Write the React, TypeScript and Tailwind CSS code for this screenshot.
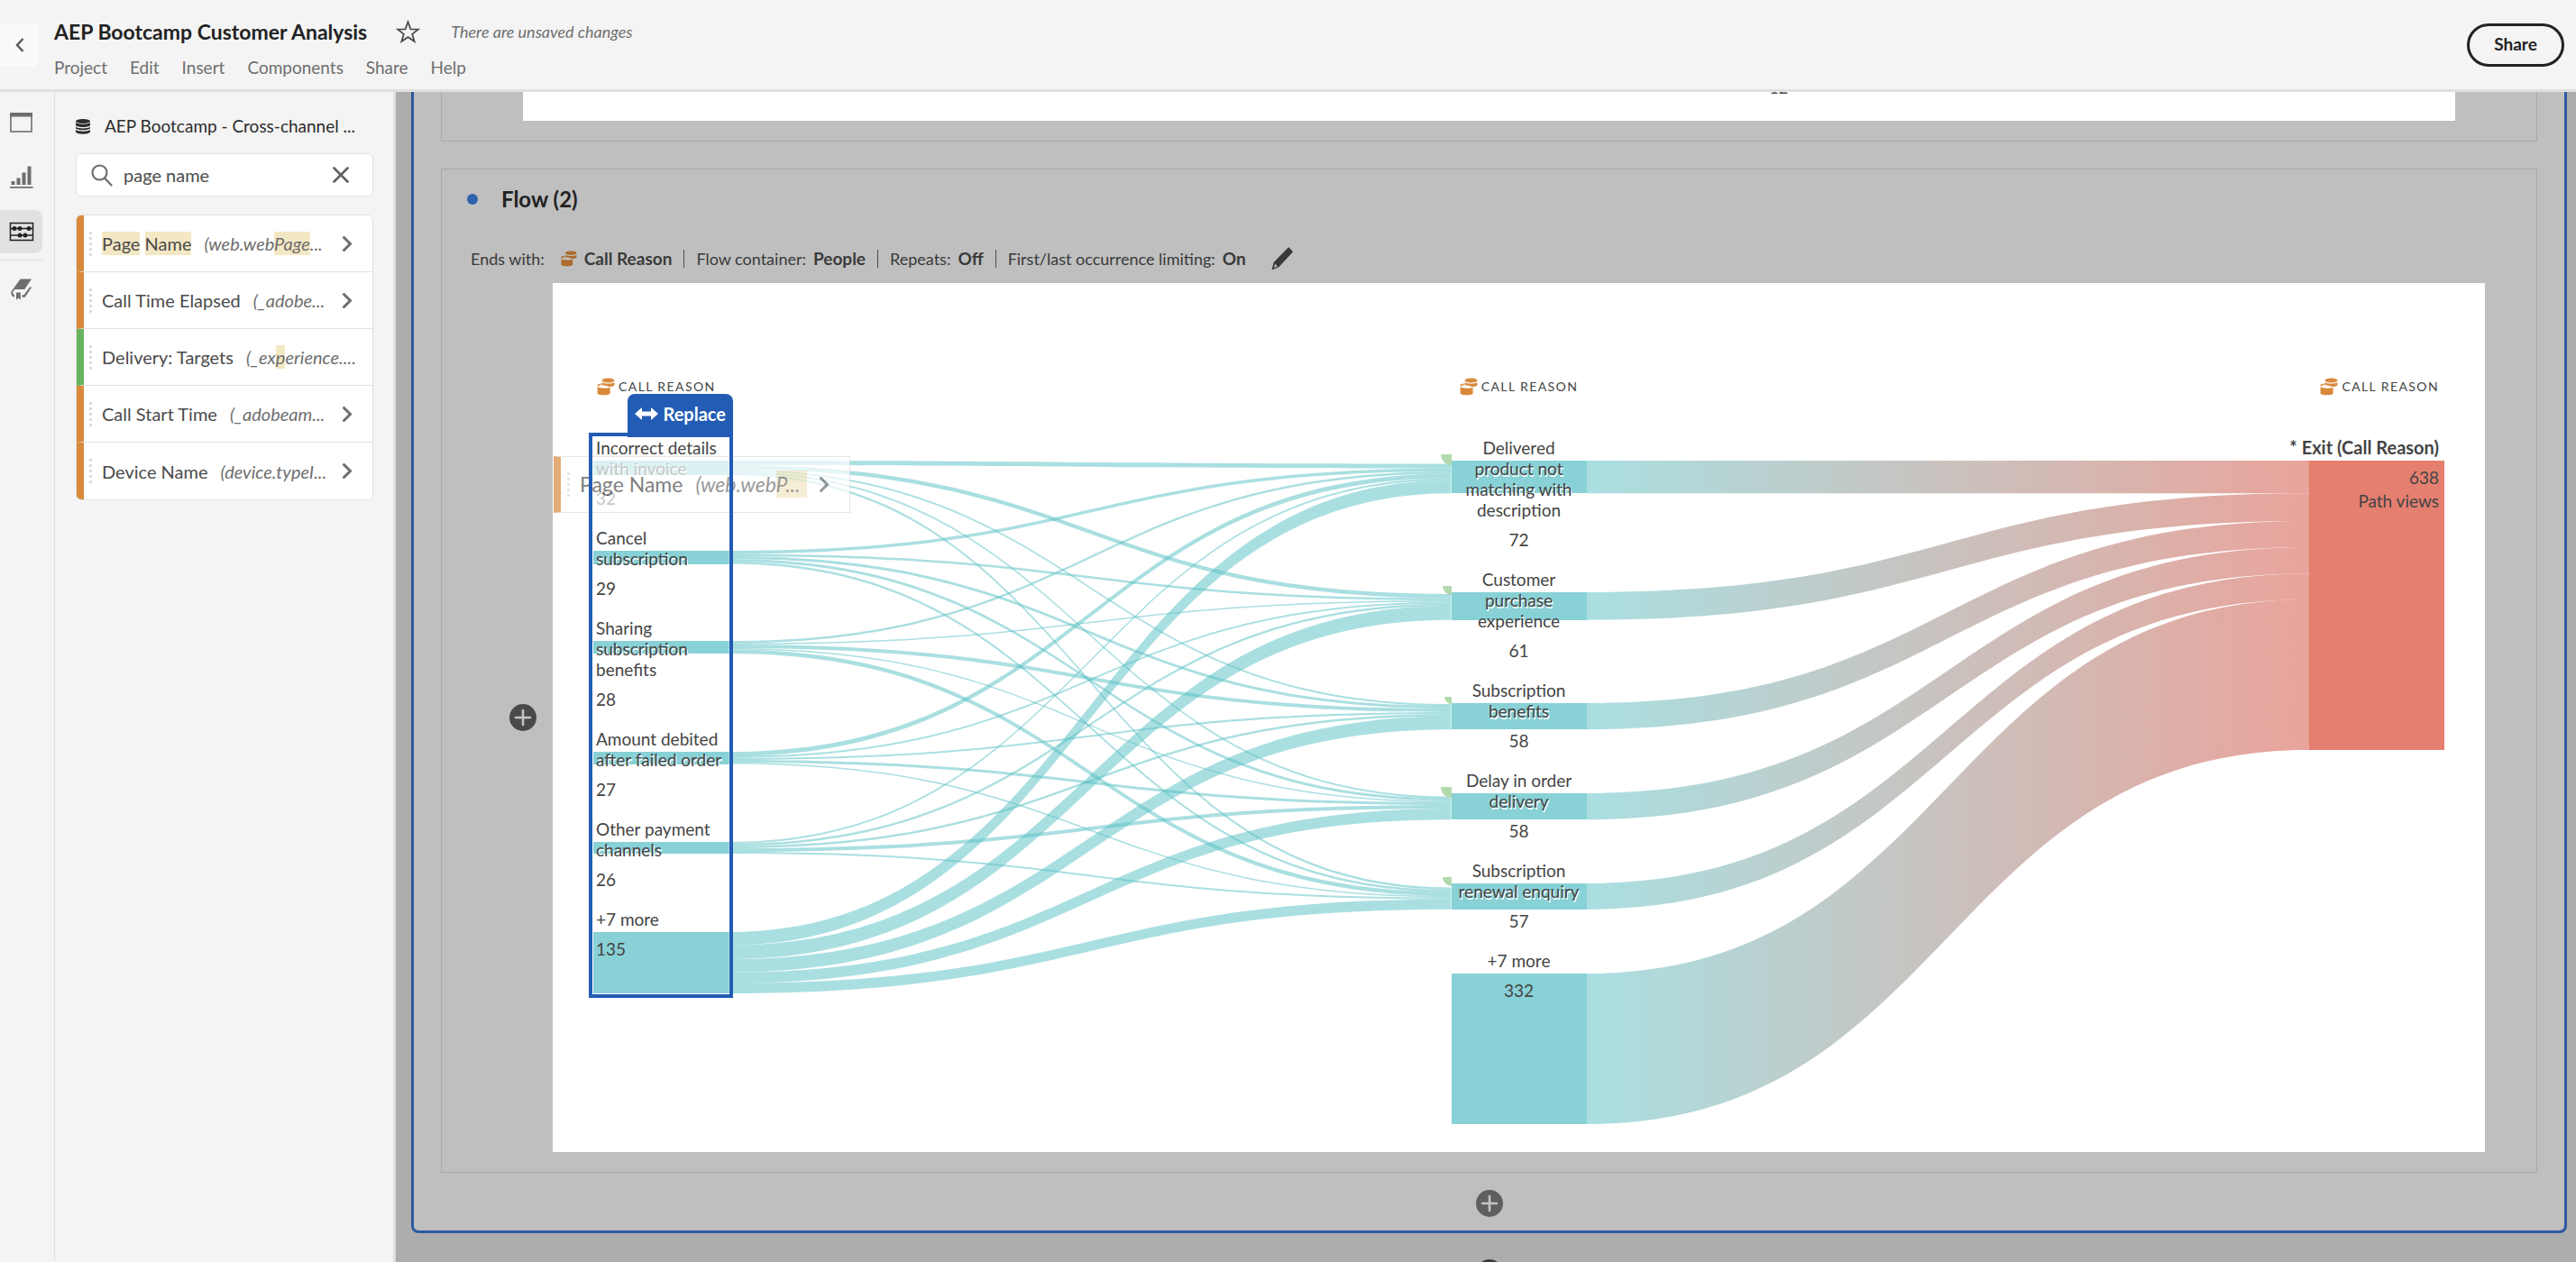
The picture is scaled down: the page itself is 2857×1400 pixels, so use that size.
import type { ReactNode } from 'react';
import clsx from 'clsx';

const menuItems = ['Project', 'Edit', 'Insert', 'Components', 'Share', 'Help'];

interface DimensionItem {
  name: ReactNode;
  path: ReactNode;
  metric?: boolean;
  expandable: boolean;
}

function Mark({ children, className }: { children: ReactNode; className?: string }) {
  return <mark className={clsx('bg-[#f3e8c3] py-px text-inherit', className)}>{children}</mark>;
}

const dimensions: DimensionItem[] = [
  {
    name: (
      <>
        <Mark>Page</Mark> <Mark>Name</Mark>
      </>
    ),
    path: (
      <>
        (web.web<Mark>Page</Mark>...
      </>
    ),
    expandable: true,
  },
  { name: 'Call Time Elapsed', path: '(_adobe...', expandable: true },
  {
    name: 'Delivery: Targets',
    path: (
      <>
        (_ex<Mark>p</Mark>erience....
      </>
    ),
    metric: true,
    expandable: false,
  },
  { name: 'Call Start Time', path: '(_adobeam...', expandable: true },
  { name: 'Device Name', path: '(device.typeI...', expandable: true },
];

interface FlowNode {
  label: string;
  lines: number;
  value: number;
  marker?: string;
}

const sources: FlowNode[] = [
  { label: 'Incorrect details\nwith invoice', lines: 2, value: 32 },
  { label: 'Cancel\nsubscription', lines: 2, value: 29 },
  { label: 'Sharing\nsubscription\nbenefits', lines: 3, value: 28 },
  { label: 'Amount debited\nafter failed order', lines: 2, value: 27 },
  { label: 'Other payment\nchannels', lines: 2, value: 26 },
  { label: '+7 more', lines: 1, value: 135 },
];

const reasons: FlowNode[] = [
  { label: 'Delivered\nproduct not\nmatching with\ndescription', lines: 4, value: 72, marker: 'w-3 h-3' },
  { label: 'Customer\npurchase\nexperience', lines: 3, value: 61, marker: 'w-2.5 h-2.5' },
  { label: 'Subscription\nbenefits', lines: 2, value: 58, marker: 'w-2 h-2' },
  { label: 'Delay in order\ndelivery', lines: 2, value: 58, marker: 'w-3 h-3' },
  { label: 'Subscription\nrenewal enquiry', lines: 2, value: 57, marker: 'w-2.5 h-2.5' },
  { label: '+7 more', lines: 1, value: 332 },
];

// rows: source nodes, columns: first five reasons
const matrix = [
  [10, 9, 4, 4, 5],
  [7, 5, 6, 6, 5],
  [5, 3, 8, 3, 9],
  [10, 4, 4, 6, 3],
  [4, 5, 5, 8, 4],
  [29, 31, 29, 24, 22],
];

const UNIT = 0.503;
const LINE = 23;
const BAR_OFFSET = 26;
const GROUP_EXTRA = 54;
const LINK_WIDTH = 800;
const LINK_HEIGHT = 793;

function barTops(nodes: FlowNode[]) {
  let y = 0;
  return nodes.map((node) => {
    const top = y + BAR_OFFSET;
    y += node.lines * LINE + GROUP_EXTRA;
    return top;
  });
}

function ribbon(y0: number, y1: number, h: number) {
  const mid = LINK_WIDTH / 2;
  return `M0 ${y0}C${mid} ${y0} ${mid} ${y1} ${LINK_WIDTH} ${y1}V${y1 + h}C${mid} ${y1 + h} ${mid} ${y0 + h} 0 ${y0 + h}Z`;
}

const sourceTops = barTops(sources);
const reasonTops = barTops(reasons);

function sourceLinks() {
  const outY = [...sourceTops];
  const inY = matrix[0].map((_, col) => {
    const inflow = matrix.reduce((sum, row) => sum + row[col], 0);
    return reasonTops[col] + (reasons[col].value - inflow) * UNIT;
  });
  return matrix.flatMap((row, r) =>
    row.map((value, c) => {
      const h = value * UNIT;
      const d = ribbon(outY[r], inY[c], h);
      outY[r] += h;
      inY[c] += h;
      return d;
    }),
  );
}

function exitLinks() {
  let y = BAR_OFFSET;
  return reasons.map((node, i) => {
    const h = node.value * UNIT;
    const d = ribbon(reasonTops[i], y, h);
    y += h;
    return d;
  });
}

function DimensionIcon({ className }: { className?: string }) {
  return (
    <svg viewBox="0 0 20 20" className={clsx('shrink-0', className)} fill="currentColor" aria-hidden="true">
      <ellipse cx="12.5" cy="3" rx="7" ry="2.5" />
      <path d="M5.5 5.2c3 1.8 11 1.8 14 0v3c-1.4 1.6-4.2 1.9-6.2 1.9-1.400-1.1-4.600-1.800-7.300-1.700-.4-.2-.5-.4-.5-.8z" />
      <path d="M.3 8.300c.5-1 2.300-1.700 4.300-1.900v1.800c-1.500.2-3 .6-4 1.200z" />
      <path d="M.6 10.300c3 1.700 11 1.700 14 .4v7c-2.500 2-11.500 2-14 0z" />
    </svg>
  );
}

function Chevron({ className }: { className?: string }) {
  return (
    <svg viewBox="0 0 11 17" className={clsx('shrink-0', className)} fill="none" stroke="currentColor" strokeWidth="3" aria-hidden="true">
      <path d="M1.500 1.500 8.500 8.500l-7 7" strokeLinecap="round" />
    </svg>
  );
}

function Grip() {
  return (
    <svg viewBox="0 0 3 27" className="h-[27px] w-[3px] shrink-0" fill="#d8d8d8" aria-hidden="true">
      {[0, 6, 12, 18, 24].map((y) => (
        <rect key={y} y={y} width="3" height="3" rx="1" />
      ))}
    </svg>
  );
}

function AddButton({ label, className }: { label: string; className?: string }) {
  return (
    <button type="button" aria-label={label} className={clsx('h-[30px] w-[30px] shrink-0 rounded-full', className)}>
      <svg viewBox="0 0 30 30" className="h-full w-full" fill="none" stroke="#c4c4c4" strokeWidth="2.600" strokeLinecap="round" aria-hidden="true">
        <path d="M15 7v16M7 15h16" />
      </svg>
    </button>
  );
}

function Header() {
  return (
    <header className="flex items-center border-b-[3px] border-[#e0e0e0] bg-[#f4f4f4]">
      <button type="button" aria-label="Back" className="flex h-12 w-[43px] items-center justify-center rounded-r-lg bg-[#fafafa] text-[#5a5a5a]">
        <svg viewBox="0 0 10 16" className="h-4 w-2.5" fill="none" stroke="currentColor" strokeWidth="2.500" aria-hidden="true">
          <path d="M8.500 1 2 8l6.500 7" />
        </svg>
      </button>
      <div className="flex-1 pt-[21px] pb-3 pl-[17px]">
        <div className="flex items-center leading-7">
          <h1 className="text-[23px] font-bold text-[#222]">AEP Bootcamp Customer Analysis</h1>
          <button type="button" aria-label="Add to favorites" className="ml-8">
            <svg viewBox="0 0 27 26" className="h-[26px] w-[27px]" fill="none" stroke="#4b4b4b" strokeWidth="1.800" strokeLinejoin="miter" aria-hidden="true">
              <path d="m13.500 2.300 2.900 8 8.500.3-6.700 5.200 2.400 8.200-7.100-4.800-7.100 4.800 2.400-8.200-6.700-5.200 8.500-.3z" />
            </svg>
          </button>
          <span className="ml-[34px] text-lg italic text-[#6e6e6e]">There are unsaved changes</span>
        </div>
        <nav className="mt-3.5 flex gap-[25px] text-[19px] leading-6 text-[#6e6e6e]">
          {menuItems.map((item) => (
            <button key={item} type="button">
              {item}
            </button>
          ))}
        </nav>
      </div>
      <button type="button" className="mr-[13px] h-12 w-[108px] rounded-full border-[3px] border-[#222] text-[19px] font-bold text-[#222]">
        Share
      </button>
    </header>
  );
}

function Rail() {
  return (
    <nav className="flex w-[61px] shrink-0 flex-col border-r border-[#e0e0e0] text-[#6e6e6e]">
      <button type="button" aria-label="Panels" className="mt-[10px] flex h-12 w-[47px] items-center justify-center">
        <svg viewBox="0 0 25 22" className="h-[22px] w-[25px]" aria-hidden="true">
          <rect x="1" y="1" width="23" height="20" fill="none" stroke="currentColor" strokeWidth="1.600" />
          <rect width="25" height="4.500" fill="currentColor" />
        </svg>
      </button>
      <button type="button" aria-label="Visualizations" className="mt-[13px] flex h-12 w-[47px] items-center justify-center">
        <svg viewBox="0 0 26 26" className="h-[26px] w-[26px]" fill="currentColor" aria-hidden="true">
          <path d="M1.500 17h4v4h-4zM7.500 13.500h4V21h-4zM13.500 7.500h4V21h-4zM19.500.500h4V21h-4zM0 23h25.500v1.800H0z" />
        </svg>
      </button>
      <button type="button" aria-label="Components" className="mt-[12px] flex h-12 w-[47px] items-center justify-center rounded-r-lg bg-[#e1e1e1] text-[#222]">
        <svg viewBox="0 0 28 22" className="h-[22px] w-[28px]" fill="none" stroke="currentColor" strokeWidth="1.500" aria-hidden="true">
          <path d="M1.500 1.500h25v19h-25zM1.500 7.500h25M1.500 15h25" />
          <g fill="currentColor" stroke="none">
            <circle cx="6" cy="7.500" r="2.500" />
            <circle cx="12" cy="7.500" r="2.500" />
            <circle cx="22" cy="7.500" r="2.500" />
            <circle cx="12" cy="15" r="2.500" />
            <circle cx="18" cy="15" r="2.500" />
          </g>
        </svg>
      </button>
      <hr className="mt-[7px] w-[47px] border-[#dcdcdc]" />
      <button type="button" aria-label="Data dictionary" className="mt-[8px] flex h-12 w-[47px] items-center justify-center">
        <svg viewBox="0 0 24 24" className="h-6 w-6" fill="currentColor" aria-hidden="true">
          <path d="M10.500.5H23L15.300 12H4.500L2.300 14.700c-.6 1.500.2 3 1.700 3.300v2.500C1 20 0 17.500.5 14.500z" />
          <path d="M6 15.500h4.800v8.300l-2.400-2.300L6 23.800zM12.500 18.300h2L21 9.500h2.200l-6.800 10.200c-.5.8-1 1.100-2 1.100h-1.900z" />
        </svg>
      </button>
    </nav>
  );
}

function Sidebar() {
  return (
    <aside className="w-[378px] shrink-0 border-r-[3px] border-[#e0e0e0] pt-[26px] pr-[22px] pl-[23px] text-xl text-[#4b4b4b]">
      <h2 className="flex items-center text-[19px] leading-6 text-[#2c2c2c]">
        <svg viewBox="0 0 16 17" className="mr-4 h-[17px] w-4 shrink-0" fill="currentColor" aria-hidden="true">
          <ellipse cx="8" cy="2.500" rx="8" ry="2.500" />
          <path d="M0 4c2.500 2.300 13.500 2.300 16 0v3.200c-2.500 2.400-13.500 2.400-16 0zM0 8.800c2.500 2.300 13.500 2.300 16 0v1.700c-2.500 2.400-13.500 2.400-16 0zM0 12c2.500 2.300 13.500 2.300 16 0v2.500c-2.500 2.900-13.500 2.900-16 0z" />
        </svg>
        <span className="whitespace-nowrap">AEP Bootcamp - Cross-channel ...</span>
      </h2>
      <div className="mt-[18px] flex h-12 items-center rounded-md border border-[#e1e1e1] bg-white pr-[26px] pl-4">
        <svg viewBox="0 0 24 25" className="h-[25px] w-6 shrink-0 text-[#6e6e6e]" fill="none" stroke="currentColor" strokeWidth="2.200" aria-hidden="true">
          <circle cx="9.500" cy="9.500" r="8" />
          <path d="m15 15.500 7.500 8" strokeLinecap="round" />
        </svg>
        <label htmlFor="component-search" className="sr-only">
          Search components
        </label>
        <input
          id="component-search"
          type="text"
          defaultValue="page name"
          className="ml-3 h-full min-w-0 flex-1 bg-transparent outline-none"
        />
        <button type="button" aria-label="Clear search">
          <svg viewBox="0 0 18 18" className="h-[18px] w-[18px] text-[#5f5f5f]" fill="none" stroke="currentColor" strokeWidth="2.600" strokeLinecap="round" aria-hidden="true">
            <path d="m1.500 1.500 15 15M16.500 1.500l-15 15" />
          </svg>
        </button>
      </div>
      <ul className="mt-5 divide-y divide-[#e1e1e1] overflow-hidden rounded-md border border-[#e1e1e1] bg-white">
        {dimensions.map((item, i) => (
          <li
            key={i}
            className={clsx('flex h-[63px] items-center border-l-8', item.metric ? 'border-l-[#68b35f]' : 'border-l-[#d9893b]')}
          >
            <span className="ml-1.5 flex">
              <Grip />
            </span>
            <span className="ml-[11px] shrink-0 whitespace-nowrap">{item.name}</span>
            <span className="ml-3.5 flex-1 whitespace-nowrap italic text-[#6e6e6e]">{item.path}</span>
            {item.expandable ? (
              <button type="button" aria-label="Show details" className="mr-[22px]">
                <Chevron className="h-[17px] w-[11px] text-[#6e6e6e]" />
              </button>
            ) : null}
          </li>
        ))}
      </ul>
    </aside>
  );
}

function ColumnHeading({ className }: { className?: string }) {
  return (
    <h4 className={clsx('flex items-center gap-1 text-sm leading-6 tracking-widest whitespace-nowrap', className)}>
      <DimensionIcon className="h-5 w-5 text-[#d9893b]" />
      CALL REASON
    </h4>
  );
}

function NodeGroup({ node, centered, last }: { node: FlowNode; centered?: boolean; last?: boolean }) {
  return (
    <div className={clsx('relative leading-[23px]', centered ? 'text-center' : 'pl-[3px]', last ? 'min-h-[94px]' : 'pb-[21px]')}>
      <div className="absolute inset-x-0 top-[26px] bg-[#88d1d6]" style={{ height: node.value * UNIT }} />
      {node.marker ? (
        <div className={clsx('absolute top-[19px] right-full rounded-bl-full bg-[#b2d9ae]', node.marker)} />
      ) : null}
      <p className="relative whitespace-pre [text-shadow:1px_2px_0_#fff]">{node.label}</p>
      <p className="relative mt-2.5">{node.value}</p>
    </div>
  );
}

function DragPreview() {
  return (
    <div className="absolute top-[21px] -left-[44px] flex h-[63px] w-[329px] items-center border border-l-8 border-[#dcdcdc] border-l-[#d9893b] bg-white text-[23px] whitespace-nowrap text-[#4b4b4b] opacity-70">
      <span className="ml-[7px] flex">
        <Grip />
      </span>
      <span className="ml-[11px]">Page Name</span>
      <span className="ml-3.5 flex-1 italic text-[#6e6e6e]">
        (web.web<Mark className="pr-2">P...</Mark>
      </span>
      <Chevron className="mr-[22px] h-[17px] w-[11px] text-[#6e6e6e]" />
    </div>
  );
}

function FlowChart() {
  return (
    <div className="flex-1 bg-white px-[45px] pt-[103px] text-[19px] text-[#444]">
      <div className="grid grid-cols-[150px_minmax(0,1fr)_150px_minmax(0,1fr)_150px]">
        <ColumnHeading className="pl-1" />
        <ColumnHeading className="col-start-3 justify-center" />
        <ColumnHeading className="col-start-5 justify-end pr-1.5" />
      </div>
      <div className="mt-11 grid grid-cols-[150px_minmax(0,1fr)_150px_minmax(0,1fr)_150px]">
        <div className="relative z-10 self-start">
          {sources.map((node, i) => (
            <NodeGroup key={node.label} node={node} last={i === sources.length - 1} />
          ))}
          <DragPreview />
          <div className="absolute -inset-[5px] border-4 border-[#235cb4]" />
          <div className="absolute right-[-5px] bottom-full flex h-12 w-[117px] items-center justify-between rounded-t-lg bg-[#235cb4] px-2 pb-1 text-xl font-bold text-white">
            <svg viewBox="0 0 26 14" className="h-3.5 w-[26px]" fill="currentColor" aria-hidden="true">
              <path d="M0 7 8 0v4.500h10V0l8 7-8 7V9.500H8V14z" />
            </svg>
            Replace
          </div>
        </div>
        <svg viewBox={`0 0 ${LINK_WIDTH} ${LINK_HEIGHT}`} preserveAspectRatio="none" className="h-[793px] w-full" fill="#55bfc3" fillOpacity="0.5" aria-hidden="true">
          {sourceLinks().map((d) => (
            <path key={d} d={d} />
          ))}
        </svg>
        <div>
          {reasons.map((node, i) => (
            <NodeGroup key={node.label} node={node} centered last={i === reasons.length - 1} />
          ))}
        </div>
        <svg viewBox={`0 0 ${LINK_WIDTH} ${LINK_HEIGHT}`} preserveAspectRatio="none" className="h-[793px] w-full" fill="url(#exit-gradient)" aria-hidden="true">
          <defs>
            <linearGradient id="exit-gradient" gradientUnits="userSpaceOnUse" x1="0" x2={LINK_WIDTH} y1="0" y2="0">
              <stop offset="0" stopColor="#aadfe1" />
              <stop offset="1" stopColor="#e9a49b" />
            </linearGradient>
          </defs>
          {exitLinks().map((d) => (
            <path key={d} d={d} />
          ))}
        </svg>
        <div className="flex flex-col items-end leading-[23px]">
          <p className="pr-1.5 text-xl leading-[23px] font-bold whitespace-nowrap">* Exit (Call Reason)</p>
          <div className="mt-[3px] h-[321px] w-full bg-[#e57f70] pt-[7px] pr-1.5 text-right">
            <p>638</p>
            <p className="mt-[3px]">Path views</p>
          </div>
        </div>
      </div>
    </div>
  );
}

function Setting({ label, value, icon, divider }: { label: string; value: string; icon?: boolean; divider?: boolean }) {
  return (
    <div className="flex items-center">
      {divider ? <span className="mx-[13px] h-5 w-px bg-[#4b4b4b]" /> : null}
      <span>{label}</span>
      {icon ? <DimensionIcon className="mr-2 ml-[18px] h-[18px] w-[18px] text-[#ad6b2c]" /> : <span className="w-2" />}
      <strong className="text-[19px] font-bold">{value}</strong>
    </div>
  );
}

function Workspace() {
  return (
    <main className="min-w-0 flex-1 overflow-hidden bg-[#adadad] pr-[10px] pl-[17px]">
      <div className="flex flex-col rounded-b-lg border-[3px] border-t-0 border-[#2c5aa0] bg-[#bfbfbf] px-[30px]">
        <section className="h-[55px] border border-t-0 border-[#a8a8a8]">
          <div className="mx-[90px] h-8 overflow-hidden bg-white text-[#4b4b4b]">
            <p className="-mt-[17px] ml-[64.500%] text-lg leading-6">12</p>
          </div>
        </section>
        <section className="mt-[30px] border border-[#a8a8a8] pt-[19px] pb-[22px]">
          <h3 className="flex items-center gap-[26px] pl-7 text-2xl leading-7 font-bold text-[#222]">
            <span className="h-3 w-3 rounded-full bg-[#2f62ad]" />
            Flow (2)
          </h3>
          <div className="mt-10 flex h-6 items-center pl-8 text-lg whitespace-nowrap text-[#3a3a3a]">
            <Setting label="Ends with:" value="Call Reason" icon />
            <Setting label="Flow container:" value="People" divider />
            <Setting label="Repeats:" value="Off" divider />
            <Setting label="First/last occurrence limiting:" value="On" divider />
            <button type="button" aria-label="Edit flow settings" className="ml-7">
              <svg viewBox="0 0 24 26" className="h-[26px] w-6" fill="currentColor" aria-hidden="true">
                <path d="M18.500.8c.4-.4 1-.4 1.400 0l3.600 4c.3.400.3.900 0 1.300L8.300 22.300.4 25.500 2.700 17zM4.200 18.500 2.800 23l4-1.600z" fillRule="evenodd" />
              </svg>
            </button>
          </div>
          <div className="mt-[15px] flex items-center gap-[18px] pr-[57px] pl-[75px]">
            <AddButton label="Add column" className="bg-[#4a4a4a]" />
            <FlowChart />
          </div>
        </section>
        <AddButton label="Add visualization" className="mt-[19px] mb-[15px] self-center bg-[#5f5f5f]" />
      </div>
      <AddButton label="Add panel" className="mx-auto mt-[29px] block bg-[#3a3a3a]" />
    </main>
  );
}

export default function App() {
  return (
    <div className="flex h-screen flex-col overflow-hidden bg-[#f4f4f4] font-['Lato',sans-serif]">
      <Header />
      <div className="flex min-h-0 flex-1">
        <Rail />
        <Sidebar />
        <Workspace />
      </div>
    </div>
  );
}
